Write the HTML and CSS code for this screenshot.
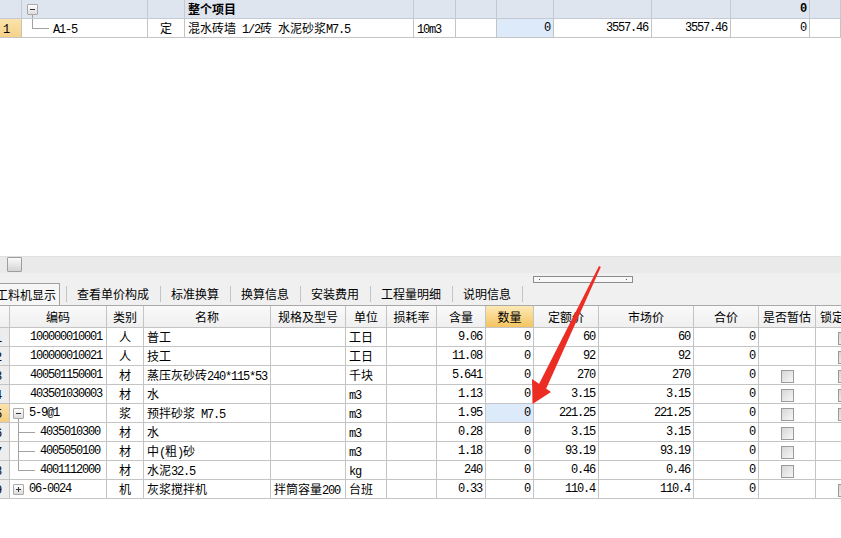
FILE: index.html
```html
<!DOCTYPE html>
<html lang="zh-CN">
<head>
<meta charset="utf-8">
<title>工料机显示</title>
<link rel="stylesheet" href="styles.css">
</head>
<body>
<div class="app">
  <div class="tgrid">
    <div class="row thead">
      <div class="c rn"></div>
      <div class="c tree t1"><span class="tb minus"></span></div>
      <div class="c"></div>
      <div class="c b">整个项目</div>
      <div class="c"></div>
      <div class="c"></div>
      <div class="c"></div>
      <div class="c"></div>
      <div class="c"></div>
      <div class="c num n b">0</div>
      <div class="c"></div>
    </div>
    <div class="row">
      <div class="c rn sel"><span class="n">1</span></div>
      <div class="c t2"><span class="n">A1-5</span></div>
      <div class="c ctr">定</div>
      <div class="c">混水砖墙<span class="n"> 1/2</span>砖<span class="n"> </span>水泥砂浆<span class="n">M7.5</span></div>
      <div class="c"><span class="n">10m3</span></div>
      <div class="c"></div>
      <div class="c num n blue">0</div>
      <div class="c num n">3557.46</div>
      <div class="c num n">3557.46</div>
      <div class="c num n">0</div>
      <div class="c"></div>
    </div>
  </div>

  <div class="blank"></div>

  <div class="hscroll"><span class="sbtn"></span></div>

  <div class="tabarea">
    <div class="splitrow"><span class="splitter"><i></i><i></i></span></div>
    <div class="tabs">
      <span class="tab active">工料机显示</span>
      <span class="sep"></span>
      <span class="tab">查看单价构成</span>
      <span class="sep"></span>
      <span class="tab">标准换算</span>
      <span class="sep"></span>
      <span class="tab">换算信息</span>
      <span class="sep"></span>
      <span class="tab">安装费用</span>
      <span class="sep"></span>
      <span class="tab">工程量明细</span>
      <span class="sep"></span>
      <span class="tab">说明信息</span>
      <span class="sep"></span>
    </div>
  </div>

  <div class="bgrid">
    <div class="row head">
      <div class="c"></div>
      <div class="c">编码</div>
      <div class="c">类别</div>
      <div class="c">名称</div>
      <div class="c">规格及型号</div>
      <div class="c">单位</div>
      <div class="c">损耗率</div>
      <div class="c">含量</div>
      <div class="c hot">数量</div>
      <div class="c">定额价</div>
      <div class="c">市场价</div>
      <div class="c">合价</div>
      <div class="c">是否暂估</div>
      <div class="c lockh">锁定</div>
    </div>

    <div class="row">
      <div class="c rn"><span class="n">1</span></div>
      <div class="c code n">100000010001</div>
      <div class="c ctr">人</div>
      <div class="c">普工</div>
      <div class="c"></div>
      <div class="c">工日</div>
      <div class="c"></div>
      <div class="c num n">9.06</div>
      <div class="c num n">0</div>
      <div class="c num n">60</div>
      <div class="c num n">60</div>
      <div class="c num n">0</div>
      <div class="c ctr"></div>
      <div class="c lock"><span class="cb"></span></div>
    </div>

    <div class="row">
      <div class="c rn"><span class="n">2</span></div>
      <div class="c code n">100000010021</div>
      <div class="c ctr">人</div>
      <div class="c">技工</div>
      <div class="c"></div>
      <div class="c">工日</div>
      <div class="c"></div>
      <div class="c num n">11.08</div>
      <div class="c num n">0</div>
      <div class="c num n">92</div>
      <div class="c num n">92</div>
      <div class="c num n">0</div>
      <div class="c ctr"></div>
      <div class="c lock"><span class="cb"></span></div>
    </div>

    <div class="row">
      <div class="c rn"><span class="n">3</span></div>
      <div class="c code n">400501150001</div>
      <div class="c ctr">材</div>
      <div class="c">蒸压灰砂砖<span class="n">240*115*53</span></div>
      <div class="c"></div>
      <div class="c">千块</div>
      <div class="c"></div>
      <div class="c num n">5.641</div>
      <div class="c num n">0</div>
      <div class="c num n">270</div>
      <div class="c num n">270</div>
      <div class="c num n">0</div>
      <div class="c ctr"><span class="cb"></span></div>
      <div class="c lock"><span class="cb"></span></div>
    </div>

    <div class="row">
      <div class="c rn"><span class="n">4</span></div>
      <div class="c code n">403501030003</div>
      <div class="c ctr">材</div>
      <div class="c">水</div>
      <div class="c"></div>
      <div class="c"><span class="n">m3</span></div>
      <div class="c"></div>
      <div class="c num n">1.13</div>
      <div class="c num n">0</div>
      <div class="c num n">3.15</div>
      <div class="c num n">3.15</div>
      <div class="c num n">0</div>
      <div class="c ctr"><span class="cb"></span></div>
      <div class="c lock"><span class="cb"></span></div>
    </div>

    <div class="row">
      <div class="c rn sel"><span class="n">5</span></div>
      <div class="c tree parent"><span class="tb minus"></span><span class="n lbl">5-9@1</span></div>
      <div class="c ctr">浆</div>
      <div class="c">预拌砂浆<span class="n"> M7.5</span></div>
      <div class="c"></div>
      <div class="c"><span class="n">m3</span></div>
      <div class="c"></div>
      <div class="c num n">1.95</div>
      <div class="c num n blue">0</div>
      <div class="c num n">221.25</div>
      <div class="c num n">221.25</div>
      <div class="c num n">0</div>
      <div class="c ctr"><span class="cb"></span></div>
      <div class="c lock"><span class="cb"></span></div>
    </div>

    <div class="row">
      <div class="c rn"><span class="n">6</span></div>
      <div class="c child n">4035010300</div>
      <div class="c ctr">材</div>
      <div class="c">水</div>
      <div class="c"></div>
      <div class="c"><span class="n">m3</span></div>
      <div class="c"></div>
      <div class="c num n">0.28</div>
      <div class="c num n">0</div>
      <div class="c num n">3.15</div>
      <div class="c num n">3.15</div>
      <div class="c num n">0</div>
      <div class="c ctr"><span class="cb"></span></div>
      <div class="c lock"></div>
    </div>

    <div class="row">
      <div class="c rn"><span class="n">7</span></div>
      <div class="c child n">4005050100</div>
      <div class="c ctr">材</div>
      <div class="c">中<span class="n">(</span>粗<span class="n">)</span>砂</div>
      <div class="c"></div>
      <div class="c"><span class="n">m3</span></div>
      <div class="c"></div>
      <div class="c num n">1.18</div>
      <div class="c num n">0</div>
      <div class="c num n">93.19</div>
      <div class="c num n">93.19</div>
      <div class="c num n">0</div>
      <div class="c ctr"><span class="cb"></span></div>
      <div class="c lock"></div>
    </div>

    <div class="row">
      <div class="c rn"><span class="n">8</span></div>
      <div class="c child last n">4001112000</div>
      <div class="c ctr">材</div>
      <div class="c">水泥<span class="n">32.5</span></div>
      <div class="c"></div>
      <div class="c"><span class="n">kg</span></div>
      <div class="c"></div>
      <div class="c num n">240</div>
      <div class="c num n">0</div>
      <div class="c num n">0.46</div>
      <div class="c num n">0.46</div>
      <div class="c num n">0</div>
      <div class="c ctr"><span class="cb"></span></div>
      <div class="c lock"></div>
    </div>

    <div class="row">
      <div class="c rn"><span class="n">9</span></div>
      <div class="c tree"><span class="tb plus"></span><span class="n lbl">06-0024</span></div>
      <div class="c ctr">机</div>
      <div class="c">灰浆搅拌机</div>
      <div class="c">拌筒容量<span class="n">200</span></div>
      <div class="c">台班</div>
      <div class="c"></div>
      <div class="c num n">0.33</div>
      <div class="c num n">0</div>
      <div class="c num n">110.4</div>
      <div class="c num n">110.4</div>
      <div class="c num n">0</div>
      <div class="c ctr"></div>
      <div class="c lock"><span class="cb"></span></div>
    </div>
  </div>

  <svg class="arrow" width="841" height="538" viewBox="0 0 841 538" aria-hidden="true">
    <polygon points="599,266 600.8,267 546,389 538.5,385" fill="#ec2d24"/>
    <polygon points="532.5,404 532,379 551,392" fill="#ec2d24"/>
  </svg>
</div>
</body>
</html>
```

FILE: styles.css
```css
* {
  box-sizing: border-box;
  margin: 0;
  padding: 0;
}

html, body {
  width: 841px;
  height: 538px;
  overflow: hidden;
  background: #fff;
}

body {
  font: 12px "Noto Sans CJK SC", "Liberation Sans", sans-serif;
  color: #000;
}

.app {
  position: relative;
  width: 841px;
  height: 538px;
  overflow: hidden;
}

.n {
  font-family: "Liberation Mono", "Noto Sans CJK SC", monospace;
  letter-spacing: -1.2px;
}

.b {
  font-weight: bold;
}

.row {
  display: grid;
  height: 19px;
}

.c {
  border-right: 1px solid #c4c4c4;
  border-bottom: 1px solid #c4c4c4;
  line-height: 18px;
  white-space: nowrap;
  overflow: hidden;
  padding: 0 3px;
}

.num {
  text-align: right;
}

.ctr {
  text-align: center;
}

.blue {
  background: #ddeafa;
}

/* ---------- top grid ---------- */
.tgrid .row {
  grid-template-columns: 22px 126px 37px 229px 42px 41px 57px 98px 79px 79px 31px;
}

.tgrid .thead {
  background: #dfe5ee;
}

.tgrid .thead .c {
  border-right-color: #c3cad4;
  border-bottom-color: #c3cad4;
}

.rn.sel {
  background: linear-gradient(#fbe3ac, #f6d188);
}

.tree {
  display: flex;
  align-items: center;
}

.t1 {
  padding-left: 5px;
  background: linear-gradient(#a2a2a2, #a2a2a2) no-repeat 10px 14px / 1px 5px;
}

.t2 {
  padding-left: 31px;
  background:
    linear-gradient(#a2a2a2, #a2a2a2) no-repeat 10px 0 / 1px 10px,
    linear-gradient(#a2a2a2, #a2a2a2) no-repeat 10px 9px / 17px 1px;
}

.tb {
  display: inline-block;
  flex: none;
  width: 11px;
  height: 11px;
  border: 1px solid #a8a8a8;
  border-radius: 1px;
}

.tb.minus {
  background:
    linear-gradient(#333, #333) no-repeat center / 5px 1px,
    linear-gradient(#ffffff, #dcdcdc);
}

.tb.plus {
  background:
    linear-gradient(#333, #333) no-repeat center / 5px 1px,
    linear-gradient(#333, #333) no-repeat center / 1px 5px,
    linear-gradient(#ffffff, #dcdcdc);
}

.blank {
  height: 218px;
}

/* ---------- scrollbar ---------- */
.hscroll {
  height: 17px;
  background: #eaeaea;
  border-top: 1px solid #e0e0e0;
  padding-left: 7px;
}

.sbtn {
  display: block;
  width: 15px;
  height: 15px;
  border: 1px solid #9e9e9e;
  border-radius: 1px;
  background: linear-gradient(#fafafa, #d4d4d4);
}

/* ---------- tabs ---------- */
.tabarea {
  background: #f0f0f0;
  border-bottom: 1px solid #a9a9a9;
}

.splitrow {
  height: 10px;
  padding-top: 3px;
  padding-left: 533px;
}

.splitter {
  display: flex;
  justify-content: space-between;
  align-items: center;
  width: 100px;
  height: 7px;
  border: 1px solid #8c8c8c;
  background: #f8f8f8;
  padding: 0 5px;
}

.splitter i {
  display: block;
  width: 1px;
  height: 1px;
  background: #555;
}

.tabs {
  display: flex;
  align-items: center;
  height: 22px;
}

.tab {
  padding: 0 11px 0 10px;
  line-height: 20px;
  white-space: nowrap;
}

.tab.active {
  margin-left: -6px;
  margin-right: 6px;
  padding: 0 3px 0 1px;
  height: 22px;
  line-height: 21px;
  background: #f6f6f6;
  border: 1px solid #a0a0a0;
  border-bottom: none;
}

.sep {
  display: block;
  width: 1px;
  height: 16px;
  background: #c4c4c4;
}

/* ---------- bottom grid ---------- */
.bgrid .row {
  grid-template-columns: 10px 97px 37px 127px 75px 41px 50px 49px 48px 65px 95px 65px 57px 57px;
}

.bgrid .head {
  height: 22px;
  background: linear-gradient(#fafafa, #efefef);
}

.bgrid .head .c {
  line-height: 21px;
  text-align: center;
  padding: 0;
}

.bgrid .head .lockh {
  text-align: left;
  padding-left: 4px;
}

.bgrid .head .hot {
  background: linear-gradient(#fde9b6, #f4c460);
}

.bgrid .rn {
  padding: 0;
  background: #ededed;
}

.bgrid .rn .n {
  display: inline-block;
  margin-left: -5px;
}

.bgrid .rn.sel {
  background: linear-gradient(#fbe3ac, #f6cd7e);
}

.code {
  padding-left: 20px;
}

.parent,
.bgrid .tree {
  padding-left: 3px;
}

.parent {
  background: linear-gradient(#a2a2a2, #a2a2a2) no-repeat 8px 15px / 1px 4px;
}

.lbl {
  margin-left: 5px;
}

.child {
  padding-left: 30px;
  background:
    linear-gradient(#a2a2a2, #a2a2a2) no-repeat 8px 0 / 1px 18px,
    linear-gradient(#a2a2a2, #a2a2a2) no-repeat 8px 9px / 17px 1px;
}

.child.last {
  background:
    linear-gradient(#a2a2a2, #a2a2a2) no-repeat 8px 0 / 1px 10px,
    linear-gradient(#a2a2a2, #a2a2a2) no-repeat 8px 9px / 17px 1px;
}

.cb {
  display: inline-block;
  width: 13px;
  height: 13px;
  vertical-align: middle;
  border: 1px solid #9a9a9a;
  background: linear-gradient(135deg, #d6d6d6, #f7f7f7);
}

.lock {
  padding-left: 22px;
}

/* ---------- annotation ---------- */
.arrow {
  position: absolute;
  left: 0;
  top: 0;
  pointer-events: none;
}
```
